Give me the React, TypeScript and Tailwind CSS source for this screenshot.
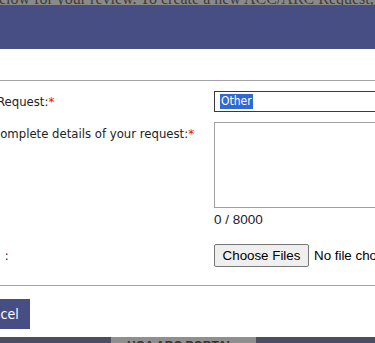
export default function App() {
  const label = "font-['DejaVu_Sans_Condensed','DejaVu_Sans',sans-serif] text-[13px] text-[#222] whitespace-nowrap";

  return (
    <div className="relative flex h-[343px] w-[375px] flex-col overflow-hidden bg-white">
      {/* dimmed page behind the dialog */}
      <div className="h-[5px] shrink-0 overflow-hidden bg-[#8a8a8a]">
        <p className="-ml-[1px] -mt-[10px] whitespace-nowrap font-['Liberation_Serif',serif] text-[16px] leading-[18px] text-[#3c3c3c]">
          elow for your review. To create a new ACC/ARC Request, please
        </p>
      </div>

      <div className="h-[44px] shrink-0 bg-[#464e84]" />

      <div className="h-[31px] shrink-0" />
      <div className="h-px shrink-0 bg-[#a3a3a3]" />

      <form className="flex flex-col pt-[10px]">
        <div className="flex h-[21px] items-center">
          <div className="w-[214px] shrink-0 overflow-hidden">
            <span className={`${label} -ml-[3px] block pt-[1px]`}>
              Request:<span className="text-[#ff0000]">*</span>
            </span>
          </div>
          <div className="flex h-[21px] w-[200px] shrink-0 items-center border border-[#3a3a3a] pl-[5px]">
            <span className="bg-[#3168d5] px-px font-['DejaVu_Sans_Condensed','DejaVu_Sans',sans-serif] text-[12px] leading-[15px] text-white">
              Other
            </span>
          </div>
        </div>

        <div className="mt-[10px] flex">
          <div className="w-[214px] shrink-0 overflow-hidden pt-[2px]">
            <span className={`${label} -ml-[8px] block`}>
              Complete details of your request:<span className="text-[#ff0000]">*</span>
            </span>
          </div>
          <div className="flex flex-col">
            <textarea className="h-[86px] w-[200px] resize-none border border-[#a0a0a0] bg-white outline-none" />
            <p className="mt-[4px] font-['Liberation_Sans',Arial,sans-serif] text-[13.5px] leading-[15px] text-[#222]">
              0 / 8000
            </p>
          </div>
        </div>

        <div className="mt-[17px] flex h-[23px] items-center">
          <div className="w-[214px] shrink-0 overflow-hidden">
            <span className={`${label} -ml-[81px] block`}>Attachments&nbsp;&nbsp;&nbsp;:</span>
          </div>
          <div className="flex items-center whitespace-nowrap font-['Liberation_Sans',Arial,sans-serif] text-[13.33px] text-black">
            <button
              type="button"
              className="h-[23px] w-[95px] rounded-[2px] border border-[#767676] bg-[#efefef]"
            >
              Choose Files
            </button>
            <span className="ml-[5px]">No file chosen</span>
          </div>
        </div>
      </form>

      <div className="mt-[18px] h-px shrink-0 bg-[#a3a3a3]" />

      <div className="pt-[13px]">
        <button
          type="button"
          className="-ml-[36px] h-[30px] bg-[#464e84] pl-[12px] pr-[11px] font-['DejaVu_Sans_Condensed','DejaVu_Sans',sans-serif] text-[14px] text-white"
        >
          Cancel
        </button>
      </div>

      <div className="mt-auto flex h-[6px] shrink-0 bg-[#4b4e63]">
        <div className="ml-[111px] w-[145px] overflow-hidden bg-[#8f8f8f]">
          <p className="mt-[2px] pl-[16px] whitespace-nowrap font-['Liberation_Sans',Arial,sans-serif] text-[12px] font-bold leading-[14px] text-[#333]">
            HOA ARC PORTAL
          </p>
        </div>
      </div>
    </div>
  );
}
